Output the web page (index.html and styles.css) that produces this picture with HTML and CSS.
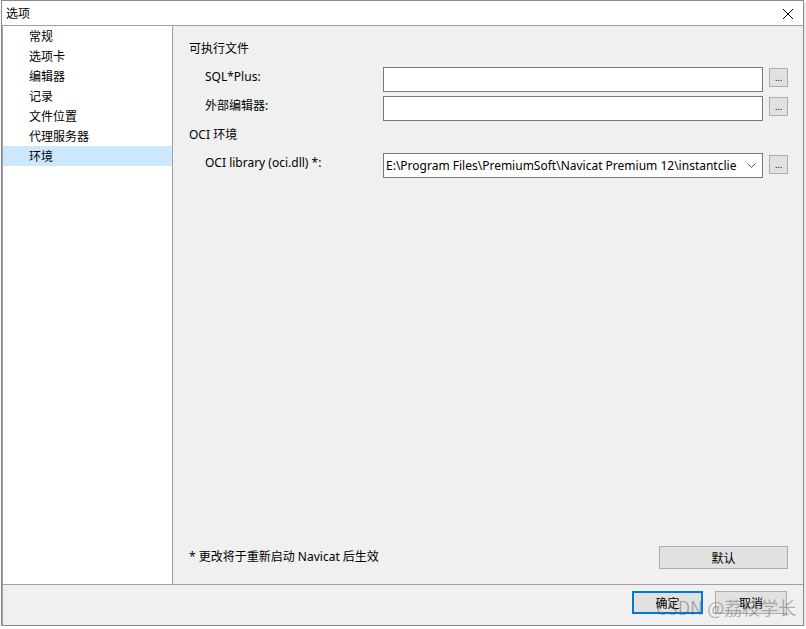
FILE: index.html
```html
<!DOCTYPE html>
<html lang="zh-CN">
<head>
<meta charset="utf-8">
<title>选项</title>
<link rel="stylesheet" href="styles.css">
</head>
<body>
<div class="window">
  <div class="titlebar">
    <span class="title">选项</span>
    <svg class="close" width="12" height="12" viewBox="0 0 12 12"><path d="M1 1 L11 11 M11 1 L1 11" stroke="#000" stroke-width="1" fill="none"/></svg>
  </div>
  <div class="frame">
    <div class="main">
      <ul class="nav">
        <li>常规</li>
        <li>选项卡</li>
        <li>编辑器</li>
        <li>记录</li>
        <li>文件位置</li>
        <li>代理服务器</li>
        <li class="selected">环境</li>
      </ul>
      <div class="panel">
        <div class="heading h1">可执行文件</div>
        <div class="row r1">
          <span class="label">SQL*Plus:</span>
          <div class="field"></div>
          <button class="dots">...</button>
        </div>
        <div class="row r2">
          <span class="label">外部编辑器:</span>
          <div class="field"></div>
          <button class="dots">...</button>
        </div>
        <div class="heading h2">OCI 环境</div>
        <div class="row r3">
          <span class="label">OCI library (oci.dll) *:</span>
          <div class="field combo">
            <span class="combo-text">E:\Program Files\PremiumSoft\Navicat Premium 12\instantclie</span>
            <svg class="chev" width="9" height="6" viewBox="0 0 9 6"><path d="M0.5 0.5 L4.5 4.5 L8.5 0.5" stroke="#555" stroke-width="1" fill="none"/></svg>
          </div>
          <button class="dots d3">...</button>
        </div>
        <div class="spacer"></div>
        <div class="bottom">
          <span class="note">* 更改将于重新启动 Navicat 后生效</span>
          <button class="btn default-btn">默认</button>
        </div>
      </div>
    </div>
    <div class="footer">
      <button class="btn ok">确定</button>
      <button class="btn cancel">取消</button>
    </div>
  </div>
  <div class="watermark">CSDN @荔枝学长</div>
</div>
</body>
</html>
```
FILE: styles.css
```css
* { box-sizing: border-box; }
html, body { margin: 0; padding: 0; background: #ffffff; }
body {
  font-family: "Noto Sans", "Noto Sans CJK SC", sans-serif;
  font-size: 12px;
  color: #000;
}
.window {
  position: relative;
  margin-left: 1px;
  width: 803px;
  height: 626px;
  border: 1px solid #8a8a8a;
  background: #f0f0f0;
  display: flex;
  flex-direction: column;
  box-shadow: 1px 2px 3px rgba(0,0,0,0.15);
}
.titlebar {
  height: 25px;
  background: #fff;
  border-bottom: 1px solid #a0a0a0;
  display: flex;
  align-items: center;
  justify-content: space-between;
  padding: 0 9px 0 4px;
  flex: none;
}
.title {
  font-family: "Noto Sans CJK SC", sans-serif;
  font-size: 12px;
  line-height: 16px;
  margin-top: -1px;
}
.close { display: block; margin-top: 2px; }
.frame {
  flex: 1;
  display: flex;
  flex-direction: column;
  border-left: 1px solid #a0a0a0;
}
.main {
  height: 559px;
  display: flex;
  border-bottom: 1px solid #a0a0a0;
  flex: none;
}
.nav {
  list-style: none;
  margin: 0;
  padding: 0;
  width: 170px;
  background: #fff;
  border-right: 1px solid #a0a0a0;
  flex: none;
}
.nav li {
  height: 20px;
  line-height: 20px;
  padding-left: 26px;
  font-family: "Noto Sans CJK SC", sans-serif;
}
.nav li.selected { background: #cce8ff; }
.panel {
  flex: 1;
  display: flex;
  flex-direction: column;
  padding-left: 16px;
  padding-right: 18px;
}
.heading { line-height: 16px; height: 16px; }
.h1 { margin-top: 15px; }
.h2 { margin-top: 6px; }
.row {
  display: flex;
  align-items: flex-start;
  height: 25px;
  padding-left: 16px;
}
.r1 { margin-top: 10px; }
.r2 { margin-top: 4px; }
.r3 { margin-top: 10px; }
.label {
  width: 178px;
  line-height: 16px;
  padding-top: 2px;
  flex: none;
}
.field {
  width: 380px;
  height: 25px;
  background: #fff;
  border: 1px solid #7a7a7a;
  flex: none;
}
.combo {
  display: flex;
  align-items: center;
  padding-left: 2px;
  overflow: hidden;
}
.combo-text {
  flex: 1;
  white-space: nowrap;
  overflow: hidden;
  line-height: 16px;
}
.chev { flex: none; margin: 1px 6px 0 6px; }
.dots {
  margin-left: 6px;
  margin-top: 1px;
  width: 19px;
  height: 19px;
  padding: 0 0 4px 0;
  border: 1px solid #adadad;
  background: #e1e1e1;
  font-family: "Noto Sans", sans-serif;
  font-size: 9px;
  line-height: 1;
  color: #000;
  display: flex;
  align-items: flex-end;
  justify-content: center;
  flex: none;
}
.d3 { margin-top: 2px; }
.spacer { flex: 1; }
.bottom {
  display: flex;
  justify-content: space-between;
  align-items: center;
  margin-bottom: 15px;
}
.note { line-height: 16px; margin-top: -1px; }
.btn {
  font-family: "Noto Sans CJK SC", sans-serif;
  font-size: 12px;
  background: #e1e1e1;
  border: 1px solid #adadad;
  color: #000;
  padding: 0;
}
.default-btn { width: 129px; height: 23px; }
.footer {
  flex: 1;
  display: flex;
  justify-content: flex-end;
  align-items: flex-start;
  padding-top: 6px;
  padding-right: 16px;
  gap: 12px;
}
.ok {
  width: 71px;
  height: 23px;
  border: 2px solid #0078d7;
}
.cancel { width: 72px; height: 23px; }
.watermark {
  position: absolute;
  left: 654px;
  top: 594px;
  font-family: "Noto Sans CJK SC", sans-serif;
  font-size: 18px;
  line-height: 24px;
  color: rgba(90, 90, 90, 0.45);
  pointer-events: none;
  white-space: nowrap;
}
```
